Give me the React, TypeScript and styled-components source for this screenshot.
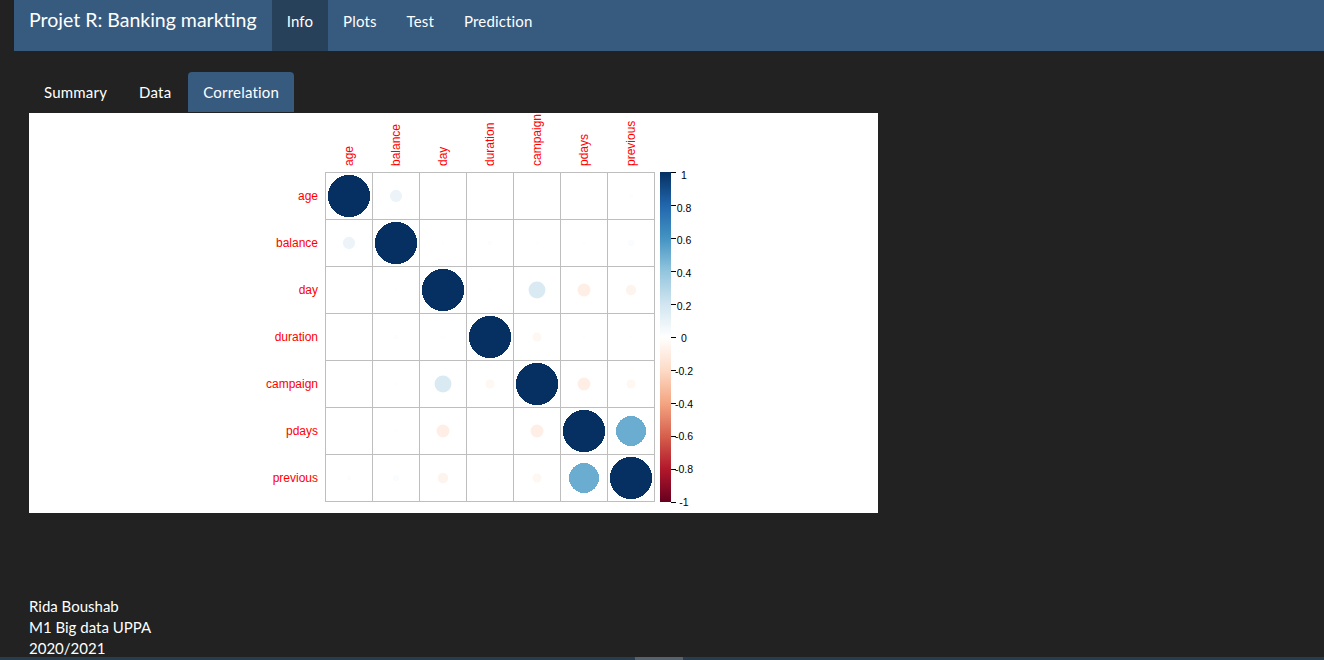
import React from 'react';
import styled, { createGlobalStyle } from 'styled-components';

const GlobalStyle = createGlobalStyle`
  html, body { margin: 0; padding: 0; background: #222222; }
  body {
    font-family: Lato, "Open Sans", "Liberation Sans", sans-serif;
    color: #ffffff;
    font-size: 15px;
    line-height: 21px;
    overflow: hidden;
  }
`;

const Page = styled.div`
  padding-left: 14px;
  height: 660px;
  box-sizing: border-box;
`;

const Navbar = styled.nav`
  display: flex;
  align-items: flex-start;
  height: 51px;
  background: #375a7f;
`;

const Brand = styled.div`
  padding: 9px 15px 0 15px;
  font-size: 19.5px;
  line-height: 21px;
  color: #ffffff;
`;

const NavList = styled.ul`
  display: flex;
  list-style: none;
  margin: 0;
  padding: 0;
`;

const NavItem = styled.li<{ $active?: boolean }>`
  height: 51px;
  box-sizing: border-box;
  padding: 11px 15px 0 15px;
  font-size: 15px;
  line-height: 21px;
  letter-spacing: 0.15px;
  color: #ffffff;
  background: ${p => (p.$active ? '#28415b' : 'transparent')};
`;

const Content = styled.div`
  padding: 0 15px;
`;

const Tabs = styled.ul`
  display: flex;
  gap: 2px;
  list-style: none;
  margin: 21px 0 1px 0;
  padding: 0;
  height: 40px;
`;

const Tab = styled.li<{ $active?: boolean }>`
  padding: 10px 15px;
  line-height: 20px;
  font-size: 15px;
  letter-spacing: 0.2px;
  color: #ffffff;
  border-radius: 4px 4px 0 0;
  background: ${p => (p.$active ? '#375a7f' : 'transparent')};
`;

const PlotBox = styled.div`
  width: 849px;
  height: 400px;
  background: #ffffff;
  svg { display: block; }
`;

const Footer = styled.div`
  margin-top: 83px;
  font-size: 15px;
  line-height: 21px;
`;

const FooterLine = styled.div`
  height: 21px;
`;

const ScrollTrack = styled.div`
  position: fixed;
  left: 0;
  right: 0;
  bottom: 0;
  height: 3px;
  background: #2a3d4f;
`;

const ScrollThumb = styled.div`
  position: absolute;
  left: 635px;
  top: 0;
  width: 48px;
  height: 3px;
  background: #56636e;
`;

const vars = ['age', 'balance', 'day', 'duration', 'campaign', 'pdays', 'previous'];

const M: number[][] = [
  [1, 0.084, -0.001, -0.0005, 0.0008, -0.0008, 0.012],
  [0.084, 1, -0.006, 0.012, -0.008, 0.007, 0.022],
  [-0.001, -0.006, 1, -0.008, 0.16, -0.094, -0.06],
  [-0.0005, 0.012, -0.008, 1, -0.045, 0.006, 0.005],
  [0.0008, -0.008, 0.16, -0.045, 1, -0.093, -0.045],
  [-0.0008, 0.007, -0.094, 0.006, -0.093, 1, 0.5],
  [0.012, 0.022, -0.06, 0.005, -0.045, 0.5, 1],
];

const PALETTE = [
  '#67001F', '#B2182B', '#D6604D', '#F4A582', '#FDDBC7', '#FFFFFF',
  '#D1E5F0', '#92C5DE', '#4393C3', '#2166AC', '#053061',
];

function hexToRgb(h: string): number[] {
  return [parseInt(h.slice(1, 3), 16), parseInt(h.slice(3, 5), 16), parseInt(h.slice(5, 7), 16)];
}

function colorFor(v: number): string {
  const pos = ((v + 1) / 2) * 10;
  const i = Math.min(9, Math.floor(pos));
  const t = pos - i;
  const a = hexToRgb(PALETTE[i]);
  const b = hexToRgb(PALETTE[i + 1]);
  const c = a.map((x, k) => Math.round(x + (b[k] - x) * t));
  return `rgb(${c[0]},${c[1]},${c[2]})`;
}

const CELL = 47;
const GX = 296;
const GY = 59;
const LABEL_FONT = '"Liberation Sans", Arial, sans-serif';
const ticks = ['1', '0.8', '0.6', '0.4', '0.2', '0', '-0.2', '-0.4', '-0.6', '-0.8', '-1'];

function CorrPlot() {
  const n = vars.length;
  return (
    <svg width={849} height={400} viewBox="0 0 849 400">
      <defs>
        <linearGradient id="cbar" x1="0" y1="0" x2="0" y2="1">
          {PALETTE.slice().reverse().map((c, i) => (
            <stop key={i} offset={`${i * 10}%`} stopColor={c} />
          ))}
        </linearGradient>
      </defs>
      {vars.map((v, i) => (
        <text
          key={`c-${v}`}
          x={0}
          y={0}
          transform={`translate(${GX + 24 + CELL * i}, 53) rotate(-90)`}
          fill="#FF0000"
          fontSize={12}
          fontFamily={LABEL_FONT}
          dominantBaseline="central"
        >
          {v}
        </text>
      ))}
      {vars.map((v, i) => (
        <text
          key={`r-${v}`}
          x={289}
          y={GY + 24 + CELL * i}
          fill="#FF0000"
          fontSize={12}
          fontFamily={LABEL_FONT}
          textAnchor="end"
          dominantBaseline="central"
        >
          {v}
        </text>
      ))}
      {Array.from({ length: n + 1 }).map((_, i) => (
        <line
          key={`v${i}`}
          x1={GX + 0.5 + CELL * i}
          x2={GX + 0.5 + CELL * i}
          y1={GY}
          y2={GY + CELL * n + 1}
          stroke="#BEBEBE"
          strokeWidth={1}
        />
      ))}
      {Array.from({ length: n + 1 }).map((_, i) => (
        <line
          key={`h${i}`}
          y1={GY + 0.5 + CELL * i}
          y2={GY + 0.5 + CELL * i}
          x1={GX}
          x2={GX + CELL * n + 1}
          stroke="#BEBEBE"
          strokeWidth={1}
        />
      ))}
      {M.map((row, r) =>
        row.map((val, c) => (
          <circle
            key={`${r}-${c}`}
            cx={GX + 24 + CELL * c}
            cy={GY + 24 + CELL * r}
            r={21.15 * Math.sqrt(Math.abs(val))}
            fill={colorFor(val)}
            shapeRendering={Math.abs(val) > 0.3 ? 'crispEdges' : 'auto'}
          />
        ))
      )}
      <rect x={631} y={59} width={11} height={330} fill="url(#cbar)" />
      {ticks.map((t, i) => (
        <g key={t}>
          <line x1={642} x2={647} y1={59.5 + 33 * i} y2={59.5 + 33 * i} stroke="#000" strokeWidth={1} />
          <text
            x={655}
            y={62 + 32.65 * i}
            fontSize={10.5}
            fontFamily={LABEL_FONT}
            textAnchor="middle"
            dominantBaseline="central"
            fill="#000"
          >
            {t}
          </text>
        </g>
      ))}
    </svg>
  );
}

export default function App() {
  return (
    <>
      <GlobalStyle />
      <Page>
        <Navbar>
          <Brand>Projet R: Banking markting</Brand>
          <NavList>
            <NavItem $active>Info</NavItem>
            <NavItem>Plots</NavItem>
            <NavItem>Test</NavItem>
            <NavItem>Prediction</NavItem>
          </NavList>
        </Navbar>
        <Content>
          <Tabs>
            <Tab>Summary</Tab>
            <Tab>Data</Tab>
            <Tab $active>Correlation</Tab>
          </Tabs>
          <PlotBox>
            <CorrPlot />
          </PlotBox>
          <Footer>
            <FooterLine>Rida Boushab</FooterLine>
            <FooterLine>M1 Big data UPPA</FooterLine>
            <FooterLine>2020/2021</FooterLine>
          </Footer>
        </Content>
      </Page>
      <ScrollTrack>
        <ScrollThumb />
      </ScrollTrack>
    </>
  );
}
